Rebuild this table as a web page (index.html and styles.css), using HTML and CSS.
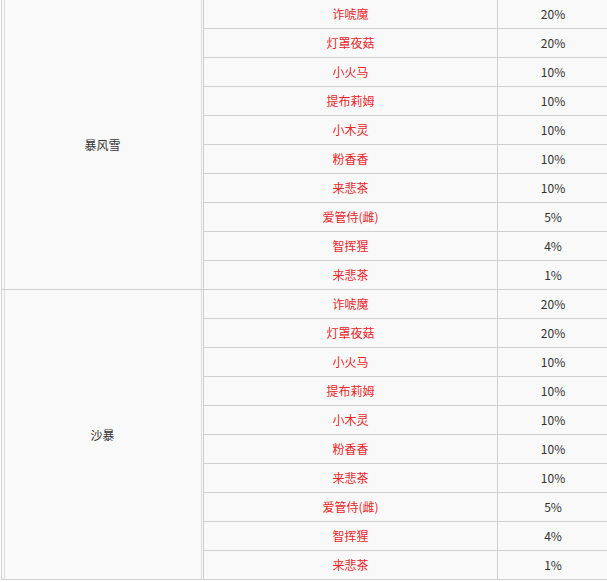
FILE: index.html
```html
<!DOCTYPE html>
<html lang="zh">
<head>
<meta charset="utf-8">
<link rel="stylesheet" href="styles.css">
</head>
<body>
<table class="drops">
  <colgroup>
    <col class="c-weather">
    <col class="c-name">
    <col class="c-rate">
  </colgroup>
  <tbody>
    <tr><td class="weather" rowspan="10">暴风雪</td><td class="name">诈唬魔</td><td class="rate">20%</td></tr>
    <tr><td class="name">灯罩夜菇</td><td class="rate">20%</td></tr>
    <tr><td class="name">小火马</td><td class="rate">10%</td></tr>
    <tr><td class="name">提布莉姆</td><td class="rate">10%</td></tr>
    <tr><td class="name">小木灵</td><td class="rate">10%</td></tr>
    <tr><td class="name">粉香香</td><td class="rate">10%</td></tr>
    <tr><td class="name">来悲茶</td><td class="rate">10%</td></tr>
    <tr><td class="name">爱管侍(雌)</td><td class="rate">5%</td></tr>
    <tr><td class="name">智挥猩</td><td class="rate">4%</td></tr>
    <tr><td class="name">来悲茶</td><td class="rate">1%</td></tr>
    <tr><td class="weather" rowspan="10">沙暴</td><td class="name">诈唬魔</td><td class="rate">20%</td></tr>
    <tr><td class="name">灯罩夜菇</td><td class="rate">20%</td></tr>
    <tr><td class="name">小火马</td><td class="rate">10%</td></tr>
    <tr><td class="name">提布莉姆</td><td class="rate">10%</td></tr>
    <tr><td class="name">小木灵</td><td class="rate">10%</td></tr>
    <tr><td class="name">粉香香</td><td class="rate">10%</td></tr>
    <tr><td class="name">来悲茶</td><td class="rate">10%</td></tr>
    <tr><td class="name">爱管侍(雌)</td><td class="rate">5%</td></tr>
    <tr><td class="name">智挥猩</td><td class="rate">4%</td></tr>
    <tr><td class="name">来悲茶</td><td class="rate">1%</td></tr>
  </tbody>
</table>
</body>
</html>
```

FILE: styles.css
```css
html, body {
  margin: 0;
  padding: 0;
  background: #ffffff;
}
body {
  font-family: "Noto Sans CJK SC", "Microsoft YaHei", sans-serif;
  font-size: 12px;
  color: #333333;
}
.drops {
  border-collapse: collapse;
  table-layout: fixed;
  width: 607px;
  margin: -1px 0 0 1px;
  background: #f9f9f9;
}
.c-weather { width: 202px; }
.c-name { width: 294px; }
.c-rate { width: 111px; }
.drops td {
  border: 1px solid #cfcfcf;
  padding: 0;
  height: 28px;
  line-height: 28px;
  text-align: center;
  vertical-align: middle;
}
.drops td.weather {
  color: #333333;
  box-shadow: inset 2px 0 0 #f9f9f9, inset 3px 0 0 #dcdcdc, inset -1px 0 0 #f9f9f9, inset -2px 0 0 #dcdcdc;
}
.drops td.name {
  color: #e8262b;
}
.drops td.rate {
  color: #333333;
}
```
